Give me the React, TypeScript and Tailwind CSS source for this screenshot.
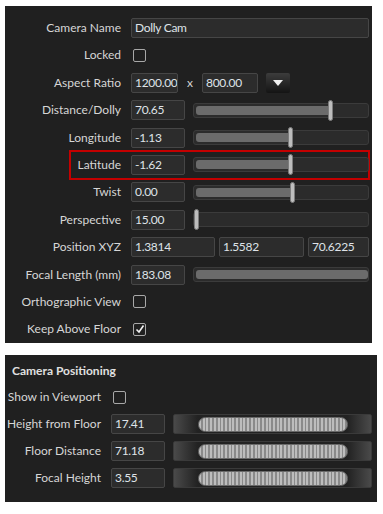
import { ReactNode } from "react";

const font = { fontFamily: 'Lato, "Noto Sans", Arial, sans-serif' };

const Box = ({ value, w }: { value: string; w: string }) => (
    <div
        className={`${w} h-[20px] shrink-0 flex items-center pl-[3px] rounded-[2px] border border-[#464646] bg-[#2c2c2c] text-[#dfe3e8] text-[12px] tracking-[-0.3px] leading-none overflow-hidden whitespace-nowrap`}
    >
        {value}
    </div>
);

const Check = ({ on }: { on?: boolean }) => (
    <div className="w-[13px] h-[13px] ml-[2px] rounded-[2px] border border-[#a8a8a8] flex items-center justify-center">
        {on && (
            <svg width="10" height="10" viewBox="0 0 10 10">
                <path d="M1.5 5.5 L4 8 L8.5 1.5" fill="none" stroke="#f2f2f2" strokeWidth="1.6" />
            </svg>
        )}
    </div>
);

const Slider = ({ pct, thumb = true }: { pct: number; thumb?: boolean }) => (
    <div className="relative flex-1 h-[15px] rounded-[3px] border border-[#3b3b3b] bg-[#2b2b2b]">
        <div
            className="absolute left-[2px] top-[2px] bottom-[2px] rounded-[3px] bg-[#6b6b6b]"
            style={{ width: `calc(${pct}% - 2px)` }}
        />
        {thumb && (
            <div
                className="absolute top-[-4px] w-[5px] h-[21px] rounded-full bg-[#bdbdbd] border border-[#7c7c7c]"
                style={{ left: `calc(${pct}% - 3px)` }}
            />
        )}
    </div>
);

const Ribbed = () => (
    <div className="flex-1 h-[20px] rounded-[2px] border border-[#3a3a3a] bg-[linear-gradient(90deg,#4a4a4a_0%,#222_12%,#222_88%,#4a4a4a_100%)] flex items-center justify-center">
        <div className="w-[150px] h-[15px] rounded-full border border-[#6a6a6a] bg-[repeating-linear-gradient(90deg,#bdbdbd_0px,#bdbdbd_2px,#8a8a8a_2px,#8a8a8a_3.7px)]" />
    </div>
);

const Row = ({ label, children, lw }: { label: string; children?: ReactNode; lw: string }) => (
    <div className="flex items-center h-[20px]">
        <div className={`${lw} shrink-0 text-right text-[12px] text-[#d6d6d6] whitespace-nowrap pr-[10px]`}>{label}</div>
        <div className="flex flex-1 items-center gap-[8px]">{children}</div>
    </div>
);

export default function App() {
    const lw = "w-[126px]";
    const lw2 = "w-[106px]";
    return (
        <div className="w-[383px] h-[514px] bg-white pt-[6px] pl-[5px]" style={font}>
            <div className="w-[367px] h-[337px] bg-[#202020] pt-[12px] pr-[3px] flex flex-col gap-[7.4px]">
                <Row label="Camera Name" lw={lw}>
                    <Box value="Dolly Cam" w="flex-1" />
                </Row>
                <Row label="Locked" lw={lw}>
                    <Check />
                </Row>
                <Row label="Aspect Ratio" lw={lw}>
                    <Box value="1200.00" w="w-[47px]" />
                    <span className="text-[12px] text-[#d6d6d6] mx-[1px]">x</span>
                    <Box value="800.00" w="w-[56px]" />
                    <div className="w-[24px] h-[20px] rounded-[2px] bg-[linear-gradient(#3c3c3c,#141414)] flex items-center justify-center">
                        <svg width="10" height="6" viewBox="0 0 10 6">
                            <path d="M0 0 H10 L5 6 Z" fill="#f0f0f0" />
                        </svg>
                    </div>
                </Row>
                <Row label="Distance/Dolly" lw={lw}>
                    <Box value="70.65" w="w-[54px]" />
                    <Slider pct={79} />
                </Row>
                <Row label="Longitude" lw={lw}>
                    <Box value="-1.13" w="w-[54px]" />
                    <Slider pct={56} />
                </Row>
                <div className="relative">
                    <div className="absolute left-[64px] right-[-1px] top-[-5px] bottom-[-5px] border-2 border-[#c40000]" />
                    <Row label="Latitude" lw={lw}>
                        <Box value="-1.62" w="w-[54px]" />
                        <Slider pct={55.5} />
                    </Row>
                </div>
                <Row label="Twist" lw={lw}>
                    <Box value="0.00" w="w-[54px]" />
                    <Slider pct={57} />
                </Row>
                <Row label="Perspective" lw={lw}>
                    <Box value="15.00" w="w-[54px]" />
                    <Slider pct={1.5} />
                </Row>
                <div className="flex items-center h-[20px]">
                    <div className={`${lw} shrink-0 text-right text-[12px] text-[#d6d6d6] pr-[10px]`}>Position XYZ</div>
                    <div className="flex flex-1 items-center gap-[4px]">
                        <Box value="1.3814" w="w-[84px]" />
                        <Box value="1.5582" w="w-[85px]" />
                        <Box value="70.6225" w="flex-1" />
                    </div>
                </div>
                <Row label="Focal Length (mm)" lw={lw}>
                    <Box value="183.08" w="w-[54px]" />
                    <Slider pct={100} thumb={false} />
                </Row>
                <Row label="Orthographic View" lw={lw}>
                    <Check />
                </Row>
                <Row label="Keep Above Floor" lw={lw}>
                    <Check on />
                </Row>
            </div>

            <div className="w-[372px] h-[147px] mt-[12px] bg-[#202020] pt-[8px] pr-[5px] flex flex-col">
                <div className="pl-[7px] text-[12px] font-bold text-[#e0e0e0] h-[16px] leading-[16px]">Camera Positioning</div>
                <div className="flex flex-col gap-[7px] mt-[8px]">
                    <Row label="Show in Viewport" lw={lw2}>
                        <Check />
                    </Row>
                    <Row label="Height from Floor" lw={lw2}>
                        <Box value="17.41" w="w-[54px]" />
                        <Ribbed />
                    </Row>
                    <Row label="Floor Distance" lw={lw2}>
                        <Box value="71.18" w="w-[54px]" />
                        <Ribbed />
                    </Row>
                    <Row label="Focal Height" lw={lw2}>
                        <Box value="3.55" w="w-[54px]" />
                        <Ribbed />
                    </Row>
                </div>
            </div>
        </div>
    );
}
